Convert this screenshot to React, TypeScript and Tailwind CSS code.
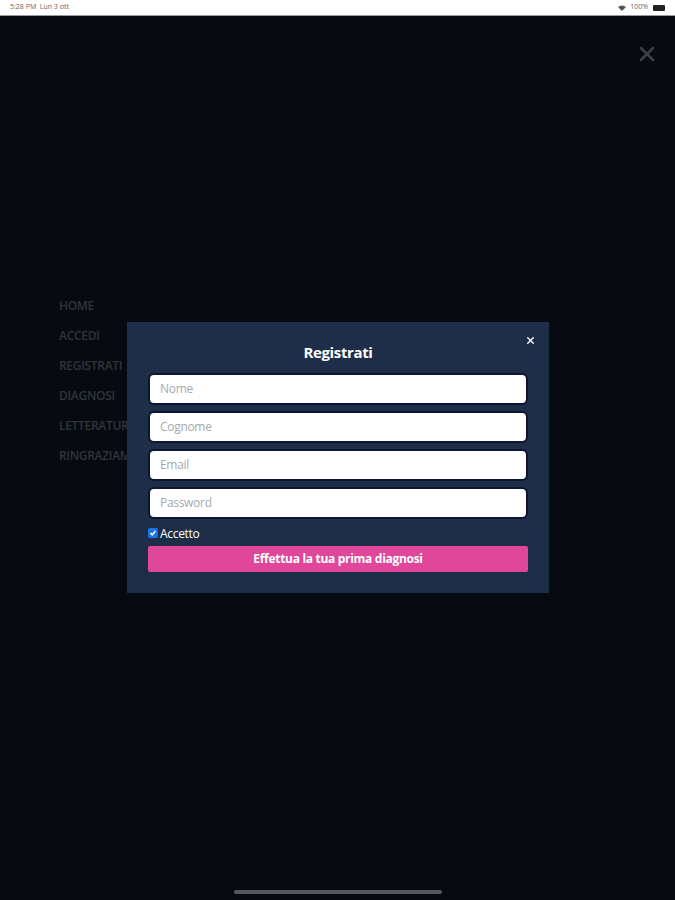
import { X } from 'lucide-react';

const menu = ['HOME', 'ACCEDI', 'REGISTRATI', 'DIAGNOSI', 'LETTERATURA', 'RINGRAZIAMENTI'];
const fields = ['Nome', 'Cognome', 'Email', 'Password'];

export default function App() {
  return (
    <div className="w-[675px] h-[900px] bg-[#070b11] flex flex-col overflow-hidden font-['Open_Sans',sans-serif]">
      {/* Status bar */}
      <div className="h-[16px] bg-white border-b border-[#9a9a9a] flex items-center justify-between px-[10px] text-[7px] text-[#666]">
        <span>5:28 PM&nbsp;&nbsp;Lun 3 ott</span>
        <span className="flex items-center gap-1">
          <svg width="8" height="6" viewBox="0 0 8 6"><path d="M4 6 L0 2 Q4 -1 8 2 Z" fill="#555" /></svg>
          100%
          <span className="w-[12px] h-[6px] bg-[#222] rounded-[1px] ml-[1px]" />
        </span>
      </div>

      <div className="relative flex-1">
        <X className="absolute right-[16px] top-[26px] w-[24px] h-[24px] text-[#3c4047]" strokeWidth={2.5} />

        {/* Side menu */}
        <div className="pt-[281px] pl-[59px] flex flex-col gap-[12px]">
          {menu.map(item => (
            <span key={item} className="text-[12px] font-semibold leading-[18px] text-[#30343b] tracking-tight">{item}</span>
          ))}
        </div>

        {/* Modal */}
        <div className="absolute left-[127px] top-[306px] w-[422px] h-[271px] bg-[#1e2e48] px-[21px] pt-[20px]">
          <X className="absolute right-[13px] top-[13px] w-[11px] h-[11px] text-white" strokeWidth={3} />
          <h2 className="text-center text-white font-bold text-[15px] leading-[20px] mb-[11px] tracking-tight">Registrati</h2>
          <div className="flex flex-col gap-[6px]">
            {fields.map(f => (
              <div key={f} className="h-[32px] bg-white rounded-[6px] border-2 border-[#0d1530] flex items-center px-[10px] text-[12px] text-[#a5a9ad] tracking-tight">
                {f}
              </div>
            ))}
          </div>
          <div className="flex items-center gap-[2px] mt-[7px] text-white text-[12px] leading-[16px] tracking-tight">
            <span className="w-[10px] h-[10px] bg-[#1a73e8] rounded-[2px] flex items-center justify-center -mt-[3px]">
              <svg width="8" height="8" viewBox="0 0 8 8"><path d="M1.5 4 L3.2 5.8 L6.5 2" stroke="white" strokeWidth="1.5" fill="none" /></svg>
            </span>
            Accetto
          </div>
          <button className="mt-[4px] w-full h-[26px] bg-[#e0479a] rounded-[2px] text-white font-bold text-[12px] tracking-tight">
            Effettua la tua prima diagnosi
          </button>
        </div>

        <div className="absolute left-[234px] bottom-[6px] w-[208px] h-[4px] rounded-full bg-[#55585e]" />
      </div>
    </div>
  );
}
